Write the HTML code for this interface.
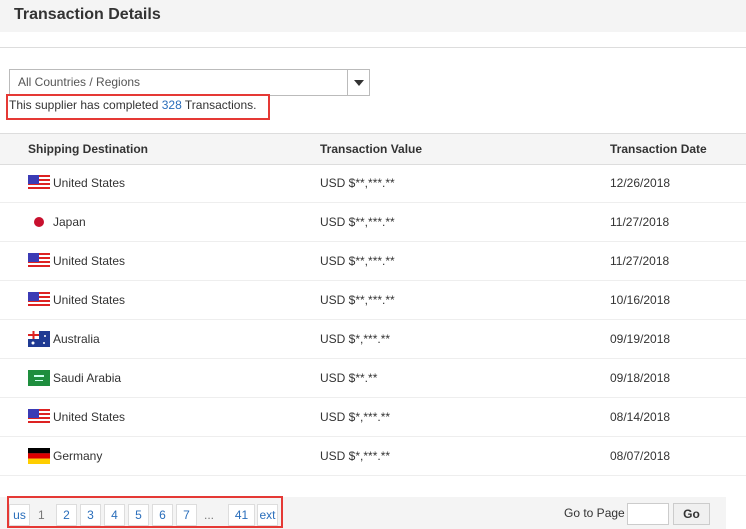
<!DOCTYPE html><html><head><style>
body{margin:0;width:746px;height:529px;background:#fff;font-family:"Liberation Sans",sans-serif;color:#333;position:relative;overflow:hidden;font-size:12px}
.a{position:absolute}
.hd{left:0;top:0;width:746px;height:32px;background:#f4f4f4}
.hd span{position:absolute;left:14px;top:6px;font-size:16px;font-weight:bold;color:#333}
.line{left:0;top:47px;width:746px;height:1px;background:#ddd}
.sel{left:9px;top:69px;width:359px;height:25px;border:1px solid #bbb;}
.sel span{position:absolute;left:8px;top:5px;color:#555}
.sel i{position:absolute;right:0;top:0;width:21px;height:25px;border-left:1px solid #bbb}
.sel i:after{content:"";position:absolute;left:6px;top:10px;border:5px solid transparent;border-top:6px solid #333;border-bottom:0}
.red{border:2px solid #e53935}
.th{left:0;top:133px;width:746px;height:30px;background:#f5f5f5;border-top:1px solid #ddd;border-bottom:1px solid #ddd;font-weight:bold}
.th span{position:absolute;top:8px}
.row{left:0;width:746px;height:38px;border-bottom:1px solid #eee}
.row span{position:absolute;top:12px}
.f{position:absolute;left:28px;top:11px;width:22px;height:16px}
.pg{left:0;top:497px;width:726px;height:32px;background:#f4f4f4}
.b{position:absolute;top:504px;height:20px;border:1px solid #ddd;background:#fff;color:#2a6ebb;text-align:center;line-height:20px;font-size:12px}
</style></head><body>
<div class="a hd"><span>Transaction Details</span></div>
<div class="a line"></div>
<div class="a sel"><span>All Countries / Regions</span><i></i></div>
<div class="a red" style="left:6px;top:94px;width:260px;height:22px"></div>
<div class="a" style="left:9px;top:98px">This supplier has completed <span style="color:#2a6ebb">328</span> Transactions.</div>
<div class="a th"><span style="left:28px">Shipping Destination</span><span style="left:320px">Transaction Value</span><span style="left:610px">Transaction Date</span></div>

<div class="a row" style="top:164px"><svg class="f" viewBox="0 0 22 16"><rect width="22" height="16" fill="#fff"/><g fill="#d22"><rect y="0" width="22" height="2"/><rect y="4" width="22" height="2"/><rect y="8" width="22" height="2"/><rect y="12" width="22" height="2"/></g><rect width="11" height="9" fill="#3b3bb5"/></svg><span style="left:53px">United States</span><span style="left:320px">USD $**,***.**</span><span style="left:610px">12/26/2018</span></div>
<div class="a row" style="top:203px"><svg class="f" viewBox="0 0 22 16"><circle cx="11" cy="8" r="5" fill="#c8102e"/></svg><span style="left:53px">Japan</span><span style="left:320px">USD $**,***.**</span><span style="left:610px">11/27/2018</span></div>
<div class="a row" style="top:242px"><svg class="f" viewBox="0 0 22 16"><rect width="22" height="16" fill="#fff"/><g fill="#d22"><rect y="0" width="22" height="2"/><rect y="4" width="22" height="2"/><rect y="8" width="22" height="2"/><rect y="12" width="22" height="2"/></g><rect width="11" height="9" fill="#3b3bb5"/></svg><span style="left:53px">United States</span><span style="left:320px">USD $**,***.**</span><span style="left:610px">11/27/2018</span></div>
<div class="a row" style="top:281px"><svg class="f" viewBox="0 0 22 16"><rect width="22" height="16" fill="#fff"/><g fill="#d22"><rect y="0" width="22" height="2"/><rect y="4" width="22" height="2"/><rect y="8" width="22" height="2"/><rect y="12" width="22" height="2"/></g><rect width="11" height="9" fill="#3b3bb5"/></svg><span style="left:53px">United States</span><span style="left:320px">USD $**,***.**</span><span style="left:610px">10/16/2018</span></div>
<div class="a row" style="top:320px"><svg class="f" viewBox="0 0 22 16"><rect width="22" height="16" fill="#1f3a93"/><rect width="11" height="8" fill="#fff"/><rect x="4.5" width="2" height="8" fill="#d22"/><rect y="3" width="11" height="2" fill="#d22"/><circle cx="5" cy="12" r="1.5" fill="#fff"/><circle cx="17" cy="5" r="1" fill="#fff"/><circle cx="16" cy="12" r="1" fill="#fff"/></svg><span style="left:53px">Australia</span><span style="left:320px">USD $*,***.**</span><span style="left:610px">09/19/2018</span></div>
<div class="a row" style="top:359px"><svg class="f" viewBox="0 0 22 16"><rect width="22" height="16" fill="#1e8e3e"/><rect x="6" y="5" width="10" height="2" fill="#cfe"/><rect x="7" y="10" width="8" height="1" fill="#cfe"/></svg><span style="left:53px">Saudi Arabia</span><span style="left:320px">USD $**.**</span><span style="left:610px">09/18/2018</span></div>
<div class="a row" style="top:398px"><svg class="f" viewBox="0 0 22 16"><rect width="22" height="16" fill="#fff"/><g fill="#d22"><rect y="0" width="22" height="2"/><rect y="4" width="22" height="2"/><rect y="8" width="22" height="2"/><rect y="12" width="22" height="2"/></g><rect width="11" height="9" fill="#3b3bb5"/></svg><span style="left:53px">United States</span><span style="left:320px">USD $*,***.**</span><span style="left:610px">08/14/2018</span></div>
<div class="a row" style="top:437px"><svg class="f" viewBox="0 0 22 16"><rect width="22" height="5.4" fill="#000"/><rect y="5.3" width="22" height="5.4" fill="#dd0000"/><rect y="10.6" width="22" height="5.4" fill="#ffce00"/></svg><span style="left:53px">Germany</span><span style="left:320px">USD $*,***.**</span><span style="left:610px">08/07/2018</span></div>

<div class="a pg"></div>
<div class="b" style="left:9px;width:19px">us</div>
<div class="a" style="left:38px;top:508px;color:#777">1</div>
<div class="b" style="left:56px;width:19px">2</div>
<div class="b" style="left:80px;width:19px">3</div>
<div class="b" style="left:104px;width:19px">4</div>
<div class="b" style="left:128px;width:19px">5</div>
<div class="b" style="left:152px;width:19px">6</div>
<div class="b" style="left:176px;width:19px">7</div>
<div class="a" style="left:204px;top:508px;color:#777">...</div>
<div class="b" style="left:228px;width:25px">41</div>
<div class="b" style="left:257px;width:19px">ext</div>
<div class="a red" style="left:7px;top:496px;width:272px;height:28px"></div>
<div class="a" style="left:564px;top:506px">Go to Page</div>
<div class="a" style="left:627px;top:503px;width:40px;height:20px;border:1px solid #ccc;background:#fff"></div>
<div class="a" style="left:673px;top:503px;width:35px;height:20px;border:1px solid #ccc;background:#f0f0f0;text-align:center;line-height:20px;font-weight:bold">Go</div>
</body></html>
